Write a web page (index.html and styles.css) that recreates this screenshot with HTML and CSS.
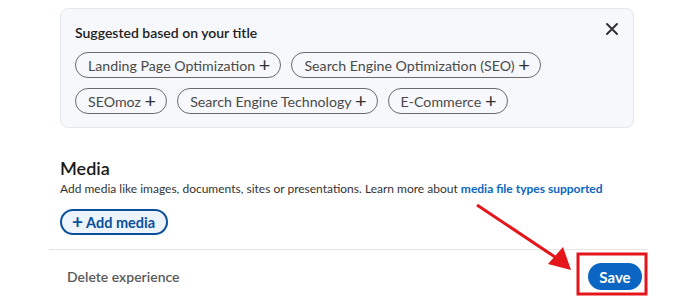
FILE: index.html
```html
<!DOCTYPE html>
<html lang="en">
<head>
  <meta charset="UTF-8">
  <meta name="viewport" content="width=device-width, initial-scale=1.0">
  <title>Edit experience</title>
  <link rel="stylesheet" href="styles.css">
</head>
<body>
  <div class="page">
    <div class="section">
      <!-- Skills suggested from the job title -->
      <div class="suggest">
        <div class="suggest-title">Suggested based on your title</div>
        <button class="close" aria-label="Dismiss">
          <svg width="14" height="14" viewBox="0 0 14 14"><path d="M2 2 L12 12 M12 2 L2 12" stroke="#333" stroke-width="2" stroke-linecap="round"/></svg>
        </button>
        <div class="chips">
          <span class="chip">Landing Page Optimization <span class="plus">+</span></span>
          <span class="chip">Search Engine Optimization (SEO) <span class="plus">+</span></span>
          <span class="chip">SEOmoz <span class="plus">+</span></span>
          <span class="chip">Search Engine Technology <span class="plus">+</span></span>
          <span class="chip">E-Commerce <span class="plus">+</span></span>
        </div>
      </div>

      <h2 class="media-title">Media</h2>
      <p class="media-desc">Add media like images, documents, sites or presentations. Learn more about <a href="#">media file types supported</a></p>
      <button class="add-media"><span class="plus">+</span> Add media</button>
    </div>

    <div class="footer">
      <span class="delete">Delete experience</span>
      <button class="save">Save</button>
    </div>
  </div>

  <!-- Annotation: arrow pointing at Save -->
  <svg class="annotation" width="700" height="300" viewBox="0 0 700 300">
    <line x1="477" y1="205" x2="558" y2="259" stroke="#e4161b" stroke-width="3"/>
    <polygon points="571,270 548,264 563,247" fill="#e4161b"/>
    <rect x="578" y="254" width="68" height="40" fill="none" stroke="#e4161b" stroke-width="3"/>
  </svg>
</body>
</html>
```

FILE: styles.css
```css
body {
  margin: 0;
  background: #fff;
  font-family: "Lato", "Noto Sans", sans-serif;
  color: #1f1f1f;
}

.page {
  width: 599px;
  margin-left: 49px;
  padding-top: 8px;
}

.section {
  padding: 0 14px 0 11px;
}

.suggest {
  position: relative;
  background: #f6f8fb;
  border: 1px solid #e4e7eb;
  border-radius: 8px;
  padding: 14px 14px 13px 14px;
}

.suggest-title {
  font-size: 14px;
  line-height: 20px;
  font-weight: 600;
  color: #222;
}

.close {
  position: absolute;
  top: 13px;
  right: 14px;
  border: none;
  background: none;
  padding: 0;
  width: 14px;
  height: 14px;
}

.chips {
  display: flex;
  flex-wrap: wrap;
  gap: 10px 10px;
  margin-top: 9px;
}

.chip {
  display: inline-flex;
  align-items: center;
  height: 26px;
  box-sizing: border-box;
  padding: 0 10px 0 12px;
  border: 1px solid #6b6b6b;
  border-radius: 14px;
  font-size: 14.2px;
  color: #4a4a4a;
  white-space: pre;
}

.chip .plus {
  font-size: 20px;
  line-height: 1;
  color: #333;
  margin-top: -2px;
}

.media-title {
  margin: 28px 0 0;
  font-size: 18px;
  line-height: 24px;
  font-weight: 600;
  color: #1a1a1a;
}

.media-desc {
  margin: 0;
  font-size: 12px;
  line-height: 18px;
  color: #333;
}

.media-desc a {
  color: #0a66c2;
  font-weight: 700;
  text-decoration: none;
}

.add-media {
  margin-top: 11px;
  height: 26px;
  padding: 0 11px 0 10px;
  border: 2px solid #0a4f9c;
  border-radius: 14px;
  background: #eef4fb;
  color: #0a4f9c;
  font-family: inherit;
  font-size: 14.5px;
  font-weight: 700;
  display: inline-flex;
  align-items: center;
  gap: 3px;
}

.add-media .plus {
  font-size: 19px;
  line-height: 1;
  margin-top: -2px;
}

.footer {
  margin-top: 14px;
  border-top: 1px solid #e6e6e6;
  padding: 13px 6px 0 18px;
  display: flex;
  justify-content: space-between;
  align-items: center;
}

.delete {
  font-size: 14px;
  font-weight: 600;
  color: #5a5a5a;
}

.save {
  width: 54px;
  height: 27px;
  border: none;
  border-radius: 14px;
  background: #0a66c2;
  color: #fff;
  font-family: inherit;
  font-size: 15px;
  font-weight: 700;
}

.annotation {
  position: absolute;
  top: 0;
  left: 0;
  pointer-events: none;
}
```
